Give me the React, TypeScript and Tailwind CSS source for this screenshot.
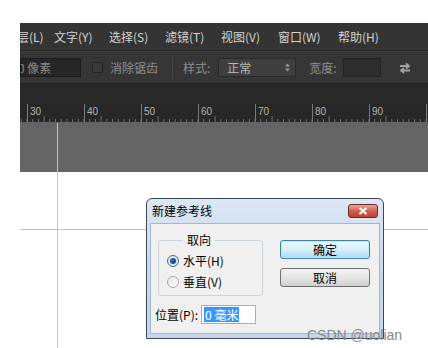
const cjk = { fontFamily: '"Noto Sans CJK SC", "Noto Sans", sans-serif' };

function Ruler() {
  const majors = [0, 1, 2, 3, 4, 5, 6, 7];
  const labels = ['30', '40', '50', '60', '70', '80', '90', ''];
  const minors: number[] = [];
  for (let i = -1; i < 72; i++) minors.push(7 + i * 5.7);
  return (
    <svg width="408" height="18" className="block">
      <rect width="408" height="18" fill="#272727" />
      {minors.map((x, i) => (
        <line key={i} x1={x} x2={x} y1={i % 10 === 4 ? 12 : 15} y2={18} stroke="#707070" strokeWidth="1" />
      ))}
      {majors.map((m) => (
        <g key={m}>
          <line x1={7.5 + m * 57} x2={7.5 + m * 57} y1={0} y2={18} stroke="#7a7a7a" strokeWidth="1" />
          <text x={10 + m * 57} y={11} fontSize="10" fill="#b4b4b4" fontFamily="Liberation Sans, sans-serif">
            {labels[m]}
          </text>
        </g>
      ))}
    </svg>
  );
}

function Radio({ checked, label }: { checked?: boolean; label: string }) {
  return (
    <div className="flex items-center h-[21px]">
      <span
        className={`w-[12px] h-[12px] rounded-full border flex items-center justify-center ${
          checked ? 'border-[#4a6d8c] bg-[#dce6ee]' : 'border-[#a9a9a9] bg-gradient-to-br from-[#e6e6e6] to-[#fdfdfd]'
        }`}
      >
        {checked && <span className="w-[6px] h-[6px] rounded-full bg-gradient-to-br from-[#3f78b5] to-[#0c3c78]" />}
      </span>
      <span className="ml-[4px] text-[12px] text-black">{label}</span>
    </div>
  );
}

export default function App() {
  return (
    <div className="relative w-[428px] h-[348px] bg-white overflow-hidden" style={cjk}>
      <div className="pt-[23px] pl-[20px]">
        {/* menu bar */}
        <div className="h-[28px] bg-[#343434] flex items-center text-[12px] text-[#d2d2d2] overflow-hidden border-b border-[#222]">
          <span className="w-[37px] shrink-0 -ml-[3px]">层(L)</span>
          <span className="w-[55px] shrink-0">文字(Y)</span>
          <span className="w-[56px] shrink-0">选择(S)</span>
          <span className="w-[56px] shrink-0">滤镜(T)</span>
          <span className="w-[57px] shrink-0">视图(V)</span>
          <span className="w-[60px] shrink-0">窗口(W)</span>
          <span className="shrink-0">帮助(H)</span>
        </div>
        {/* options bar */}
        <div className="h-[33px] bg-[#363636] flex items-center text-[12px] text-[#8e8e8e] border-t border-[#444] border-b border-b-[#1f1f1f]">
          <div className="w-[61px] h-[19px] bg-[#262626] border border-[#1c1c1c] flex items-center text-[#8a8a8a] overflow-hidden">
            <span className="-ml-[3px]">0 像素</span>
          </div>
          <span className="ml-[11px] w-[11px] h-[11px] bg-[#3a3a3a] border border-[#242424] rounded-[2px]" />
          <span className="ml-[7px]">消除锯齿</span>
          <span className="ml-[14px] w-px h-[22px] bg-[#252525] border-r border-[#444]" />
          <span className="ml-[10px]">样式:</span>
          <div className="ml-[8px] w-[78px] h-[19px] bg-[#3f3f3f] border border-[#2a2a2a] flex items-center justify-between pl-[8px] pr-[5px] text-[#b8b8b8]">
            <span>正常</span>
            <svg width="5" height="9" viewBox="0 0 5 9">
              <path d="M0 3.5L2.5 0.5 5 3.5zM0 5.5L2.5 8.5 5 5.5z" fill="#9a9a9a" />
            </svg>
          </div>
          <span className="ml-[13px]">宽度:</span>
          <div className="ml-[6px] w-[38px] h-[19px] bg-[#2d2d2d] border border-[#222]" />
          <svg width="14" height="14" viewBox="0 0 14 14" className="ml-[17px]">
            <path d="M2 5h8M8 2.5l3 2.5-3 2.5" stroke="#a0a0a0" strokeWidth="1.8" fill="none" />
            <path d="M12 9.5H4M6 7l-3 2.5 3 2.5" stroke="#a0a0a0" strokeWidth="1.8" fill="none" />
          </svg>
        </div>
        <div className="h-[20px] bg-[#282828]" />
        <Ruler />
        <div className="h-[50px] bg-[#646464]" />
      </div>

      {/* guides */}
      <div className="absolute left-[57px] top-[123px] w-px h-[225px] bg-[#7fdcec]" />
      <div className="absolute left-[20px] top-[229px] w-[408px] h-px bg-[#7fdcec]" />

      {/* dialog */}
      <div className="absolute left-[146px] top-[198px] w-[238px] h-[141px] rounded-t-[6px] border border-[#3a4756] bg-gradient-to-b from-[#dbe7f4] via-[#c9d9ec] to-[#c6d7eb] flex flex-col px-[3px] pb-[4px]">
        <div className="h-[24px] flex items-center justify-between pl-[2px] pr-[2px]">
          <span className="text-[12px] text-black">新建参考线</span>
          <div className="w-[30px] h-[14px] rounded-[3px] border border-[#6e2a22] bg-gradient-to-b from-[#e5a797] via-[#cf5f4e] to-[#c0402f] flex items-center justify-center -mt-[1px]">
            <svg width="10" height="8" viewBox="0 0 10 8">
              <path d="M1.5 1l7 6M8.5 1l-7 6" stroke="#fff" strokeWidth="2.2" />
            </svg>
          </div>
        </div>
        <div className="flex-1 bg-[#f0f0f0] border border-[#a7b7ca] flex pl-[4px] pr-[9px]">
          <div className="flex flex-col pt-[9px]">
            <fieldset className="ml-[3px] w-[105px] h-[63px] border border-[#cdd5dc] rounded-[3px] pl-[8px]">
              <legend className="ml-[16px] px-[4px] text-[12px] text-black leading-[14px]">取向</legend>
              <div className="mt-[3px]">
                <Radio checked label="水平(H)" />
                <Radio label="垂直(V)" />
              </div>
            </fieldset>
            <div className="mt-[9px] flex items-center">
              <span className="text-[12px] text-black">位置(P):</span>
              <div className="ml-[3px] w-[55px] h-[19px] bg-white border border-[#abadb3] flex items-center pl-[2px]">
                <span className="bg-[#3399ff] text-white text-[12px] leading-[15px] px-[1px]">0 毫米</span>
              </div>
            </div>
          </div>
          <div className="ml-auto flex flex-col pt-[16px] gap-[9px]">
            <div className="w-[90px] h-[19px] rounded-[3px] border border-[#3c7fb1] bg-gradient-to-b from-[#eaf6fd] via-[#d9f0fc] to-[#a9daf5] flex items-center justify-center text-[12px] text-black shadow-[inset_0_0_0_1px_#c3eaf9]">
              确定
            </div>
            <div className="w-[90px] h-[19px] rounded-[3px] border border-[#707070] bg-gradient-to-b from-[#f2f2f2] via-[#e6e6e6] to-[#d0d0d0] flex items-center justify-center text-[12px] text-black">
              取消
            </div>
          </div>
        </div>
      </div>

      {/* watermark */}
      <div
        className="absolute left-[307px] top-[325px] text-[14px] text-[#888888]"
        style={{ fontFamily: '"Liberation Sans", Arial, sans-serif' }}
      >
        CSDN @uolian
      </div>
    </div>
  );
}
